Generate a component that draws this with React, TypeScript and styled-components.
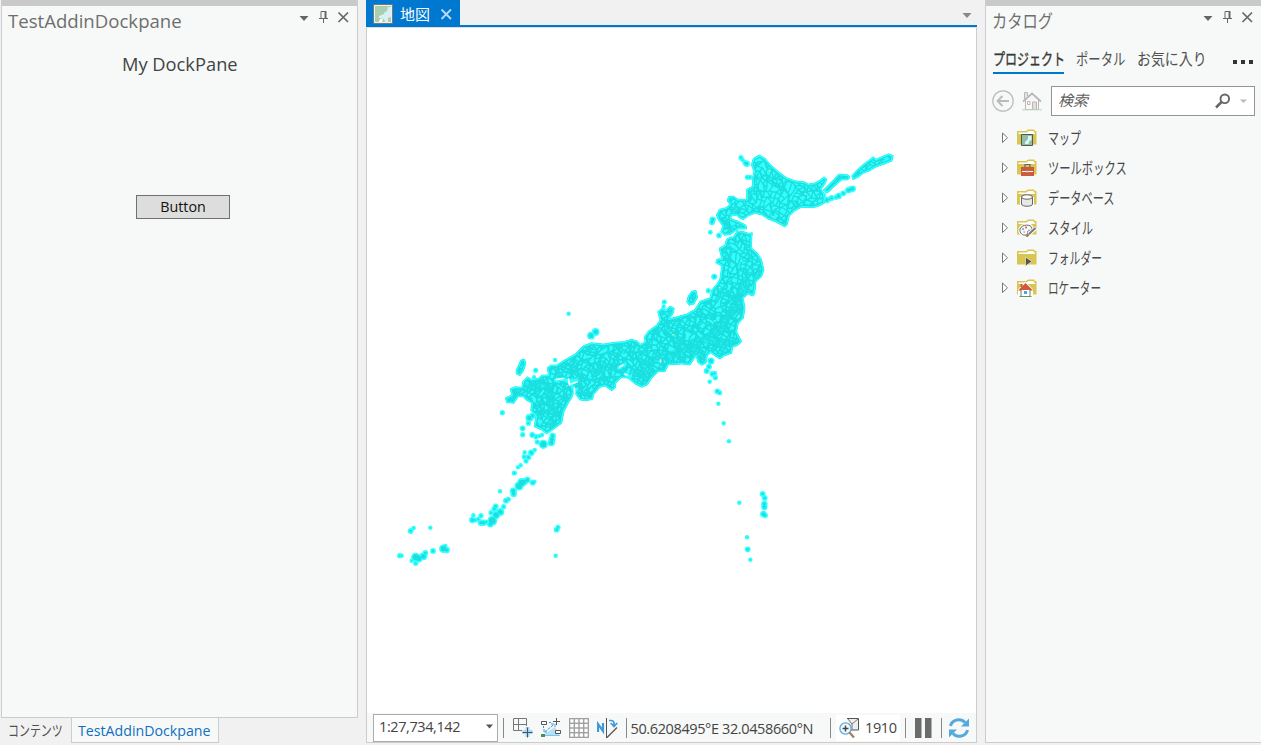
import React from "react";
import styled, { createGlobalStyle, css } from "styled-components";

const GlobalStyle = createGlobalStyle`
  * { box-sizing: border-box; }
  body {
    margin: 0;
    background: #f1f1f1;
    color: #444;
    font-family: "Open Sans", "Noto Sans CJK JP", sans-serif;
    overflow: hidden;
  }
  svg { display: block; flex: none; }
`;

const Workspace = styled.div`
  display: flex;
  width: 1261px;
  height: 745px;
`;

/* ---------- shared pieces ---------- */

const FitBox = styled.span<{ $w: number }>`
  display: inline-block;
  flex: none;
  width: ${(p) => p.$w}px;
  white-space: nowrap;
`;
const FitInner = styled.span<{ $scale: number }>`
  display: inline-block;
  transform: scaleX(${(p) => p.$scale});
  transform-origin: 0 50%;
`;
/** Condensed label, like the UI kana of the desktop font. */
const Fit = ({ w, scale, children }: { w: number; scale: number; children: React.ReactNode }) => (
  <FitBox $w={w}>
    <FitInner $scale={scale}>{children}</FitInner>
  </FitBox>
);

const PaneHeader = styled.header`
  display: flex;
  justify-content: space-between;
  height: 30px;
  border-top: 6px solid #c9c9c9;
  padding: 0 7px 0 6px;
  flex: none;
`;
const PaneTitle = styled.h1`
  margin: 2px 0 0;
  font-size: 18.600px;
  line-height: 26px;
  font-weight: 400;
  color: #6e6e6e;
`;
const PaneTools = styled.div`
  display: flex;
  gap: 8px;
  padding-top: 4px;
`;

const CaretIcon = ({ color = "#666" }: { color?: string }) => (
  <svg width="11" height="14" viewBox="0 0 11 14">
    <path d="M.5 6h9L5 11z" fill={color} />
  </svg>
);
const PinIcon = () => (
  <svg width="11" height="14" viewBox="0 0 11 14" fill="none" stroke="#666">
    <path d="M3 8V1.500H8M1 8.500H10M5.500 9V13" />
    <path d="M7.500 1V8" strokeWidth="2" />
  </svg>
);
const CloseIcon = ({ color = "#666", width = 1.7 }: { color?: string; width?: number }) => (
  <svg width="13" height="14" viewBox="0 0 13 14">
    <path d="M1.500 2.500l9.500 9.500M11 2.500l-9.500 9.500" stroke={color} strokeWidth={width} />
  </svg>
);
const Tools = () => (
  <PaneTools>
    <CaretIcon />
    <PinIcon />
    <CloseIcon />
  </PaneTools>
);

/* ---------- left dock pane ---------- */

const LeftColumn = styled.section`
  width: 358px;
  padding-left: 1px;
  display: flex;
  flex-direction: column;
`;
const LeftPane = styled.div`
  height: 718px;
  background: #f7f9f8;
  border: 1px solid #ccc;
  border-top: 0;
  display: flex;
  flex-direction: column;
  align-items: stretch;
`;
const DockBody = styled.div`
  display: flex;
  flex-direction: column;
  align-items: flex-start;
`;
const DockCaption = styled.p`
  margin: 21px 0 0 120px;
  font-size: 18.300px;
  line-height: 26px;
`;
const DockButton = styled.button`
  width: 94px;
  height: 24px;
  margin: 118px 0 0 134px;
  padding: 0;
  border: 1px solid #707070;
  border-radius: 0;
  background: #ddd;
  color: #111;
  font: 14.300px/22px "Open Sans", sans-serif;
`;
const BottomTabs = styled.nav`
  display: flex;
  align-items: flex-start;
  height: 27px;
`;
const BottomTab = styled.div<{ $active?: boolean }>`
  height: 25px;
  padding: 0 8px 0 7px;
  font-size: 15px;
  line-height: 25px;
  color: #505050;
  ${(p) =>
    p.$active &&
    css`
      color: #0f6fc0;
      font-size: 14.200px;
      padding: 0 7px 0 6px;
      background: #f7f9f8;
      border: 1px solid #ccc;
      border-top: 0;
    `}
`;

/* ---------- map view ---------- */

const MapColumn = styled.main`
  width: 611px;
  margin-left: 8px;
  height: 743px;
  display: flex;
  flex-direction: column;
`;
const DocTabs = styled.div`
  height: 28px;
  display: flex;
  justify-content: space-between;
  align-items: flex-start;
  border-bottom: 1px solid #ddd;
  background: linear-gradient(#0078d0, #0078d0) 0 25px / 100% 2px no-repeat;
`;
const DocTab = styled.div`
  display: flex;
  align-items: center;
  width: 94px;
  height: 27px;
  padding: 1px 0 0 7px;
  background: #0078d0;
  color: #fff;
  font: 15px/25px "Noto Sans CJK JP", sans-serif;
`;
const DocName = styled.span`
  width: 30px;
  margin: -2px 10px 0 7px;
`;
const DocMenu = styled.div`
  padding: 7px 4px 0 0;
`;
const MapBody = styled.div`
  flex: 1;
  border: 1px solid #ccc;
  border-width: 0 1px;
  background: #fff;
`;
const StatusBar = styled.footer`
  height: 30px;
  display: flex;
  align-items: center;
  background: #f7f9f8;
  border: 1px solid #ccc;
  border-top: 0;
  padding-left: 6px;
  font-size: 14.500px;
  letter-spacing: -0.4px;
  color: #444;
`;
const ScaleBox = styled.div`
  width: 125px;
  height: 28px;
  display: flex;
  align-items: center;
  justify-content: space-between;
  padding: 0 4px 2px 5px;
  background: #fff;
  border: 1px solid #ababab;
`;
const Divider = styled.i<{ $l: number; $r: number }>`
  width: 1px;
  height: 20px;
  background: #888;
  margin: 0 ${(p) => p.$r}px 0 ${(p) => p.$l}px;
  flex: none;
`;
const IconRow = styled.div`
  display: flex;
  gap: 8px;
`;
const Coordinates = styled.div`
  width: 182px;
  height: 24px;
  line-height: 26px;
  overflow: hidden;
  display: flex;
  justify-content: flex-end;
  white-space: nowrap;
  letter-spacing: -0.380px;
`;
const Selection = styled.div`
  display: flex;
  align-items: center;
  gap: 5px;
  width: 64px;
  height: 26px;
  background: #fff;
  padding-left: 3px;
`;

type Trace = [number, number, string];

const mainIsland: Trace[] = [
  [620, 230, "322,25 340,20 352,2 372,5 385,10 397,8 395,30 395,55 412,68 425,90 432,120 425,140 408,155 405,185 398,198 385,192 370,205 375,235 370,265 355,280 350,305 365,335 355,345 338,352 335,370 312,378 300,388 285,378 272,368 262,378 258,400 245,406 234,398 228,378 210,405 185,402 145,405 135,425 115,425 95,445 82,465 65,472 45,462 25,445 12,443"],
  [490, 300, "393,234 378,248 376,264 365,272 345,258 330,262 312,283 308,298 290,302 270,300 260,287 252,275 245,295 235,310 222,335 215,370 195,385 170,402 155,390 132,380 138,350 122,332 125,310 108,300 100,290 85,290 72,310 50,308 46,294 65,285 60,266 76,260 95,262 98,245 112,230 125,238 145,235 155,225 175,225 172,203 182,195 200,195 220,182 255,162 280,137 305,128 340,132 380,126 400,125 425,118 442,123 452,133 465,125"],
  [620, 230, "72,322 85,303 110,285 120,270 113,245 125,235 137,240 150,228 163,235 160,250 148,266 165,262 200,252 225,238 240,214 270,203 275,180 292,160 300,145 305,108 287,98 291,87 305,86 297,55 315,45 318,32"],
];
const islands: Trace[][] = [
  mainIsland,
  [[690, 140, "190,55 208,45 225,55 240,72 262,92 290,113 315,122 345,126 355,132 372,130 390,120 402,110 411,118 405,132 394,147 402,160 405,175 403,190 390,197 370,203 335,202 315,212 298,228 292,254 284,261 272,254 257,246 235,238 215,225 195,220 175,228 160,239 148,234 140,226 125,226 122,235 135,240 150,246 168,256 170,267 145,267 120,284 103,286 92,276 98,258 85,240 79,225 88,208 108,203 119,193 112,183 115,170 130,168 145,178 170,178 170,148 188,138 187,115 192,95 184,75"]],
  [[690, 140, "410,160 400,150 410,140 430,120 446,102 476,105 480,113 472,120 455,120 435,137 420,152"]],
  [[690, 140, "485,108 500,90 520,73 540,58 550,50 558,58 580,48 596,41 610,47 606,63 590,70 560,80 540,92 520,100 505,112 489,119"]],
  [[620, 230, "215,184 228,181 233,202 222,222 208,226 200,215 205,197"]],
  [[490, 300, "92,180 103,177 108,190 101,212 90,227 79,222 78,210 86,195"]],
];
const toPath = (parts: Trace[]) =>
  "M" +
  parts
    .flatMap(([ox, oy, pts]) =>
      pts.split(" ").map((p) => {
        const [x, y] = p.split(",").map(Number);
        return `${(ox + x / 3).toFixed(1)} ${(oy + y / 3).toFixed(1)}`;
      })
    )
    .join("L") +
  "Z";
const landPath = islands.map(toPath).join("");

const isletGroups: Trace[] = [
  [690, 140, "153,53,7 158,60,6 170,71,9 165,68,7 172,112,7 180,112,7 68,239,9 66,247,8 61,277,6 87,287,7 410,180,9 418,177,7 425,174,8 438,172,7 446,168,9 460,160,8 475,151,9 482,148,9 488,146,9 398,166,9 72,410,7"],
  [620, 230, "271,7,6 297,16,7 283,140,8 265,182,7 133,216,7 131,230,6 396,188,9 273,393,10 267,410,8 260,423,8 277,432,8 284,430,7 286,443,7 269,455,6 292,484,8 299,488,7 295,521,6"],
  [490, 300, "236,41,6 303,107,11 317,96,11 195,180,6 137,211,7 37,338,7 98,385,8 98,404,7 127,405,8 138,410,7 148,408,6 156,405,6 118,354,11 128,347,9 115,370,7 142,426,7 160,433,13 188,408,9 186,418,10 184,428,10 104,457,6 124,458,9 134,450,6 103,470,7 115,472,8 108,483,7 92,496,6 84,502,6 73,519,7 132,232,6"],
  [385, 430, "345,184,6 443,158,8 448,155,6 427,150,9 418,155,10 410,158,13 402,168,13 385,183,10 386,192,9 363,212,8 370,208,7 356,230,7 332,229,8 328,237,8 346,246,11 333,255,12 318,248,7 322,272,14 316,283,9 304,276,7 288,278,9 296,278,9 288,257,7 280,268,7 262,270,9 270,270,7 265,256,6 86,294,6 77,303,8 136,293,6 44,377,7 50,377,6 92,382,13 101,385,12 115,379,11 121,369,8 92,400,7 80,392,6 144,363,8 175,356,12 185,360,9 181,348,6 519,292,7 515,299,8 512,377,6"],
  [680, 350, "131,220,6 147,274,6 178,458,6 248,432,8 254,444,8 253,462,9 253,471,9 250,492,9 255,496,8 201,562,6 203,598,8 211,629,6"],
];
const islets = isletGroups.flatMap(([ox, oy, pts]) =>
  pts.split(" ").map((p) => {
    const [x, y, r] = p.split(",").map(Number);
    return { x: ox + x / 3, y: oy + y / 3, r: r / 3 + 0.25 };
  })
);

/** Municipality borders: an irregular net of short segments, tilted by `angle`. */
function buildNet(cx: number, cy: number, radius: number, cell: number, angle: number) {
  const jitter = (i: number, j: number, k: number) => {
    const s = Math.sin(i * 127.1 + j * 311.7 + k * 74.7) * 43758.5453;
    return s - Math.floor(s);
  };
  const cos = Math.cos(angle) * cell;
  const sin = Math.sin(angle) * cell;
  const at = (i: number, j: number) => {
    const u = i + jitter(i, j, 1) * 1.15;
    const v = j + jitter(i, j, 2) * 1.15;
    return `${(cx + u * cos - v * sin).toFixed(1)} ${(cy + u * sin + v * cos).toFixed(1)}`;
  };
  const n = Math.ceil(radius / cell);
  let d = "";
  for (let j = -n; j < n; j++)
    for (let i = -n; i < n; i++) {
      if (jitter(i, j, 3) > 0.1) d += `M${at(i, j)}L${at(i + 1, j)}`;
      if (jitter(i, j, 4) > 0.1) d += `M${at(i, j)}L${at(i, j + 1)}`;
      if (jitter(i, j, 5) > 0.7) d += `M${at(i, j)}L${at(i + 1, j + 1)}`;
    }
  return d;
}
const northNet = buildNet(790, 185, 105, 4.3, 0.6);
const tohokuNet = buildNet(735, 255, 45, 4, 0.35);
const southNet = buildNet(630, 370, 135, 3.5, 0.5);

const JapanMap = () => (
  <svg width="609" height="685" viewBox="367 28 609 685">
    <defs>
      <clipPath id="land">
        <path d={landPath} />
      </clipPath>
      <clipPath id="north">
        <path d="M600 100H900V240L750 228H700z" />
      </clipPath>
      <clipPath id="tohoku">
        <path d="M690 228H750L780 238V290H690z" />
      </clipPath>
      <clipPath id="south">
        <path d="M480 290H780V450H480z" />
      </clipPath>
    </defs>
    {islets.map((c, i) => (
      <circle key={i} cx={c.x} cy={c.y} r={c.r} fill="#33ffff" />
    ))}
    {islets.map((c, i) => (
      <circle key={i} cx={c.x} cy={c.y} r={Math.max(0.7, c.r - 1.6)} fill="#1cdede" />
    ))}
    <path d={landPath} fill="#33ffff" stroke="#33ffff" strokeWidth=".9" strokeLinejoin="round" />
    <g clipPath="url(#land)" fill="none" strokeLinejoin="round">
      <path d={northNet} clipPath="url(#north)" stroke="#1cdede" strokeWidth="1.400" />
      <path d={tohokuNet} clipPath="url(#tohoku)" stroke="#1cdede" strokeWidth="1.500" />
      <path d={southNet} clipPath="url(#south)" stroke="#1cdede" strokeWidth="1.700" />
      <path
        d="M745 280L738 300 720 330 700 342 680 352 660 358 645 364M705 340L740 345M635 372L650 380M548 388L552 410M540 384L520 388"
        stroke="#1cdede"
        strokeWidth="8"
        strokeOpacity=".55"
        strokeLinecap="round"
      />
      <path d={landPath} stroke="#1cdede" strokeWidth="5.200" />
      <path d={landPath} stroke="#33ffff" strokeWidth="2.600" />
    </g>
    <g fill="none" stroke="#33ffff" strokeWidth="3.400" strokeLinecap="round">
      <path d="M555.500 380L564 379 569 382 577 380M619 368L625 364M625 374L630 377M571 384L575 391" />
    </g>
    <g fill="none" stroke="#fff" strokeWidth="1.600" strokeLinecap="round">
      <path d="M556.500 379.500L563 378.500M568.500 379L569.500 385M571 384L577 382M619.500 367L623 365M574.500 388V393M625 374L627 375M660.500 360V362" />
    </g>
    <g fill="#a8f5b8">
      <path d="M769 170h1.500v1.500h-1.500zM805 193h1.500v1.500h-1.500zM772 216h1.500v1.500h-1.500zM741 260h1.500v1.500h-1.500zM714 320h1.500v1.500h-1.500zM738 316h1.500v1.500h-1.500zM672 334h2v1.500h-2zM719 287h1.500v1.500h-1.500z" />
    </g>
  </svg>
);

const MapTabIcon = () => (
  <svg width="20" height="20" viewBox="0 0 20 20">
    <path d="M.5.500h19v19H.5z" fill="#a9cfb0" stroke="#6d7b82" />
    <path d="M1.500 1.500h17v17h-17z" fill="none" stroke="#f2efe6" />
    <path d="M15 3h3v10l-3 1v4h-3l-1-3-5-1v-2l5-2V9l3-2z" fill="#d8eff5" />
    <path d="M6 18l1-3h3l-1 3z" fill="#fff" />
  </svg>
);
const AddPaneIcon = () => (
  <svg width="20" height="20" viewBox="0 0 20 20" fill="none">
    <path d="M9 12.500H.5V.5h13V8M5.500 .5v12M.5 6.500h13" stroke="#777" />
    <path d="M14.500 9v10M9.500 14h10" stroke="#a5d8f7" strokeWidth="4" />
    <path d="M14.500 9.500v10M9.500 14.500h10" stroke="#456" />
  </svg>
);
const ConstraintIcon = () => (
  <svg width="20" height="20" viewBox="0 0 20 20" fill="none">
    <path d="M2 17L14 9l5 9H3z" fill="#b9dff5" />
    <path d="M.5 3.500h5v3h-5zM14.500 12.500h5v3h-5z" fill="#fff" stroke="#555" />
    <path d="M12 3.500h7M15.500 0v7" stroke="#555" />
    <path d="M3.500 14L13 6.500M3 11v3h3M10 6h4v3M2.500 8v2M8 4.500h2" stroke="#3d9ad6" strokeDasharray="3 1" />
    <path d="M3 17.500h16" stroke="#7cc4ea" />
    <path d="M0 16h4v3H0z" fill="#4a8f52" />
  </svg>
);
const GridIcon = () => (
  <svg width="20" height="20" viewBox="0 0 20 20">
    <path d="M0 0h20v20H0z" fill="#a0a0a0" />
    {[1.3, 6, 10.700, 15.400].flatMap((y) =>
      [1.3, 6, 10.700, 15.400].map((x) => <rect key={`${x}-${y}`} x={x} y={y} width="3.300" height="3.300" fill="#fff" />)
    )}
  </svg>
);
const NorthIcon = () => (
  <svg width="21" height="20" viewBox="0 0 21 20" fill="none">
    <path d="M1 14V6L6 13V5" stroke="#3d9ad6" strokeWidth="2.200" />
    <path d="M9.500 0v20" stroke="#555" />
    <path d="M10 19.500L20 9.500" stroke="#555" strokeWidth="1.200" />
    <path d="M12 2.500h2.500q3 0 2.700 5.500M13.800 5l3.200 3.500L20.300 5" stroke="#3d9ad6" strokeWidth="1.700" />
  </svg>
);
const ZoomSelectionIcon = () => (
  <svg width="21" height="21" viewBox="0 0 21 21" fill="none">
    <path d="M8 1.500h11.500v11.500H12" fill="#eee" stroke="#555" />
    <path d="M9 2l4 5 6-5M13 7v6" stroke="#777" />
    <circle cx="6.500" cy="11.500" r="5.600" fill="#f2faff" stroke="#5ba9dc" strokeWidth="1.300" />
    <path d="M3.500 11.500h6M6.500 8.500v6" stroke="#444" strokeWidth="1.500" />
    <path d="M10.500 15.500l4.500 5" stroke="#ad7f57" strokeWidth="2.300" />
  </svg>
);
const PauseIcon = () => (
  <svg width="17" height="20" viewBox="0 0 17 20">
    <path d="M0 0h6.500v20H0zM10 0h6.500v20H10z" fill="#6b6b6b" />
  </svg>
);
const RefreshIcon = () => (
  <svg width="20" height="20" viewBox="0 0 20 20">
    <path d="M1.500 8C3 1 12 0 16 4.500M18.500 12C17 19 8 20 4 15.500" fill="none" stroke="#56a8dd" strokeWidth="3" />
    <path d="M20 .5v8h-8zM0 19.500v-8h8z" fill="#56a8dd" />
  </svg>
);

/* ---------- catalog pane ---------- */

const Catalog = styled.aside`
  width: 276px;
  height: 743px;
  margin-left: 8px;
  display: flex;
  flex-direction: column;
  background: #f7f9f8;
  border-left: 1px solid #ccc;
  border-bottom: 1px solid #ccc;
`;
const CatalogTabs = styled.nav`
  display: flex;
  align-items: flex-start;
  height: 44px;
  margin-top: 16px;
  padding-left: 7px;
  font: 16px/24px "Noto Sans CJK JP", sans-serif;
`;
const CatalogTab = styled.div<{ $active?: boolean; $gap: number }>`
  height: 28px;
  margin-right: ${(p) => p.$gap}px;
  color: #505050;
  ${(p) =>
    p.$active &&
    css`
      color: #3a3a3a;
      border-bottom: 2px solid #0078c8;
      -webkit-text-stroke: 0.4px #3a3a3a;
    `}
`;
const More = styled.div`
  display: flex;
  gap: 4px;
  padding-top: 14px;
`;
const MoreDot = styled.i`
  width: 4px;
  height: 4px;
  background: #333;
`;
const SearchRow = styled.div`
  display: flex;
  align-items: center;
  margin-top: -4px;
  height: 30px;
  padding: 0 6px;
`;
const SearchBox = styled.div`
  display: flex;
  align-items: center;
  width: 204px;
  height: 30px;
  margin-left: 9px;
  padding: 0 7px 0 6px;
  border: 1px solid #949494;
  background: #fff;
  font: italic 15px/26px "Noto Sans CJK JP", sans-serif;
  color: #606060;
`;
const SearchHint = styled.span`
  flex: 1;
  padding-bottom: 2px;
`;
const Tree = styled.ul`
  list-style: none;
  margin: 7px 0 0;
  padding: 0 0 0 15px;
`;
const TreeRow = styled.li`
  display: flex;
  align-items: center;
  height: 30px;
  font: 16px/26px "Noto Sans CJK JP", sans-serif;
  color: #484848;
`;
const TreeIcon = styled.span`
  margin: 0 11px 0 8px;
`;
const TreeLabel = styled.span`
  padding-bottom: 2px;
`;

const BackIcon = () => (
  <svg width="22" height="22" viewBox="0 0 22 22" fill="none" stroke="#bbb">
    <circle cx="11" cy="11" r="10.200" strokeWidth="1.200" />
    <path d="M17 11H6M10.500 6L5.500 11l5 5" strokeWidth="2" />
  </svg>
);
const HomeIcon = () => (
  <svg width="20" height="20" viewBox="0 0 20 20" fill="none" stroke="#b8b8b8" style={{ marginLeft: 8 }}>
    <path d="M3.500 9V18.500H16.500V9" fill="#f8f8f8" />
    <path d="M1 10.500L10 2.500l9 8" strokeWidth="1.800" />
    <path d="M2.500 8V1.500h3V5" fill="#eadfda" />
    <path d="M5.500 10.500h2.500v3H5.500z" />
    <path d="M10.500 18v-7h4v7" fill="#ecdcd0" />
    <path d="M0 18.800h20" stroke="#bcd8bc" />
  </svg>
);
const SearchIcon = () => (
  <svg width="16" height="16" viewBox="0 0 16 16" fill="none" stroke="#666">
    <circle cx="9.800" cy="5.800" r="4.300" strokeWidth="1.900" />
    <path d="M6.500 9L1 14.500" strokeWidth="2.500" />
  </svg>
);
const SearchCaret = () => (
  <svg width="7" height="5" viewBox="0 0 7 5" style={{ marginLeft: 9 }}>
    <path d="M0 .5h7L3.500 4z" fill="#bbb" />
  </svg>
);
const Expander = () => (
  <svg width="8" height="12" viewBox="0 0 8 12">
    <path d="M1.500 1v9.500l5-4.700z" fill="#fff" stroke="#777" />
  </svg>
);

const overlays: Record<string, React.ReactNode> = {
  map: (
    <>
      <path d="M4.500 6.500h11v11h-11z" fill="#8fc0a5" stroke="#555" />
      <path d="M11 8h3.500v4l-2 1-1 3H8v-2l3-3z" fill="#dff3f8" />
    </>
  ),
  toolbox: (
    <>
      <path d="M8 9V6.500h5V9" fill="none" stroke="#666" strokeWidth="1.200" />
      <path d="M4 9h13v9H4z" fill="#cc5a3c" />
      <path d="M5 13.500h11" stroke="#fff" />
      <path d="M9.500 12.500h2v2h-2z" fill="#bbb" />
    </>
  ),
  database: (
    <>
      <path d="M4.500 9v7c0 3 11 3 11 0V9" fill="#eee" stroke="#fff" strokeWidth="3" />
      <path d="M4.500 9v7c0 3 11 3 11 0V9" fill="#e8e8e8" stroke="#666" />
      <ellipse cx="10" cy="9" rx="5.500" ry="2.200" fill="#fff" stroke="#666" />
    </>
  ),
  style: (
    <>
      <path d="M3 11C5 6 14 6 15 10c0 3-3 2-4 3s1 3-2 4-7-2-6-6z" fill="#f7f7f7" stroke="#fff" strokeWidth="3" />
      <path d="M3 11C5 6 14 6 15 10c0 3-3 2-4 3s1 3-2 4-7-2-6-6z" fill="#f7f7f7" stroke="#666" />
      <circle cx="6" cy="11" r="1" fill="#5ba9dc" />
      <circle cx="9" cy="9.500" r="1" fill="#d9534f" />
      <path d="M6.500 14h1.500" stroke="#5aa56a" />
      <path d="M12 16l7-6" stroke="#fff" strokeWidth="4" />
      <path d="M12 16l6.500-6" stroke="#777" strokeWidth="2" />
      <path d="M8.500 18.500l2.500-3 1.500 1.500-2 2z" fill="#a8703f" />
    </>
  ),
  folder: <path d="M8.500 9l6.500 4.500L8.500 18z" fill="#555" stroke="#e8dfa0" strokeWidth=".8" />,
  locator: (
    <>
      <path d="M2 12L8.500 5l6.500 7v7H2z" fill="#fff" stroke="#fff" strokeWidth="2" />
      <path d="M4 11v7.500h9V11" fill="#fff" stroke="#777" />
      <path d="M1 12.500L8.500 5 16 12.500h-3L8.500 9l-4.500 3.500zM3.500 6h2v3h-2z" fill="#d05a3a" />
      <path d="M4 12l4.500-4 4.500 4z" fill="#d05a3a" />
      <path d="M7 13h3v3H7z" fill="#4aa3dc" />
      <path d="M2.500 18.500h12" stroke="#4ca05c" />
    </>
  ),
};

const FolderIcon = ({ kind }: { kind: string }) => (
  <svg width="20" height="20" viewBox="0 0 20 20">
    <path d="M0 3h9l2-1.500h6L18 3h1.500v13.500H0z" fill="#d9c552" />
    <path d="M1.500 6V4.500h8l2-1.500h5l.5 1.500h1V6z" fill="#fff" />
    {overlays[kind]}
  </svg>
);

const treeItems = [
  { kind: "map", label: "マップ", w: 33 },
  { kind: "toolbox", label: "ツールボックス", w: 79 },
  { kind: "database", label: "データベース", w: 67 },
  { kind: "style", label: "スタイル", w: 45 },
  { kind: "folder", label: "フォルダー", w: 54 },
  { kind: "locator", label: "ロケーター", w: 53 },
];

export default function App() {
  return (
    <>
      <GlobalStyle />
      <Workspace>
        <LeftColumn>
          <LeftPane>
            <PaneHeader>
              <PaneTitle>TestAddinDockpane</PaneTitle>
              <Tools />
            </PaneHeader>
            <DockBody>
              <DockCaption>My DockPane</DockCaption>
              <DockButton>Button</DockButton>
            </DockBody>
          </LeftPane>
          <BottomTabs>
            <BottomTab>
              <Fit w={55} scale={0.73}>コンテンツ</Fit>
            </BottomTab>
            <BottomTab $active>TestAddinDockpane</BottomTab>
          </BottomTabs>
        </LeftColumn>

        <MapColumn>
          <DocTabs>
            <DocTab>
              <MapTabIcon />
              <DocName>地図</DocName>
              <CloseIcon color="#b8dcf5" width={1.8} />
            </DocTab>
            <DocMenu>
              <CaretIcon color="#888" />
            </DocMenu>
          </DocTabs>
          <MapBody>
            <JapanMap />
          </MapBody>
          <StatusBar>
            <ScaleBox>
              1:27,734,142
              <svg width="7" height="5" viewBox="0 0 7 5">
                <path d="M0 .5h7L3.500 4.500z" fill="#555" />
              </svg>
            </ScaleBox>
            <Divider $l={5} $r={9} />
            <IconRow>
              <AddPaneIcon />
              <ConstraintIcon />
              <GridIcon />
              <NorthIcon />
            </IconRow>
            <Divider $l={8} $r={4} />
            <Coordinates>50.6208495°E 32.0458660°N</Coordinates>
            <Divider $l={17} $r={5} />
            <Selection>
              <ZoomSelectionIcon />
              1910
            </Selection>
            <Divider $l={5} $r={9} />
            <PauseIcon />
            <Divider $l={9} $r={7} />
            <RefreshIcon />
          </StatusBar>
        </MapColumn>

        <Catalog>
          <PaneHeader>
            <PaneTitle>
              <Fit w={61} scale={0.82}>カタログ</Fit>
            </PaneTitle>
            <Tools />
          </PaneHeader>
          <CatalogTabs>
            <CatalogTab $active $gap={12}>
              <Fit w={71} scale={0.75}>プロジェクト</Fit>
            </CatalogTab>
            <CatalogTab $gap={12}>
              <Fit w={49} scale={0.77}>ポータル</Fit>
            </CatalogTab>
            <CatalogTab $gap={27}>
              <Fit w={69} scale={0.87}>お気に入り</Fit>
            </CatalogTab>
            <More>
              <MoreDot />
              <MoreDot />
              <MoreDot />
            </More>
          </CatalogTabs>
          <SearchRow>
            <BackIcon />
            <HomeIcon />
            <SearchBox>
              <SearchHint>検索</SearchHint>
              <SearchIcon />
              <SearchCaret />
            </SearchBox>
          </SearchRow>
          <Tree>
            {treeItems.map((item) => (
              <TreeRow key={item.kind}>
                <Expander />
                <TreeIcon>
                  <FolderIcon kind={item.kind} />
                </TreeIcon>
                <TreeLabel>
                  <Fit w={item.w} scale={item.w / (16 * item.label.length)}>{item.label}</Fit>
                </TreeLabel>
              </TreeRow>
            ))}
          </Tree>
        </Catalog>
      </Workspace>
    </>
  );
}
